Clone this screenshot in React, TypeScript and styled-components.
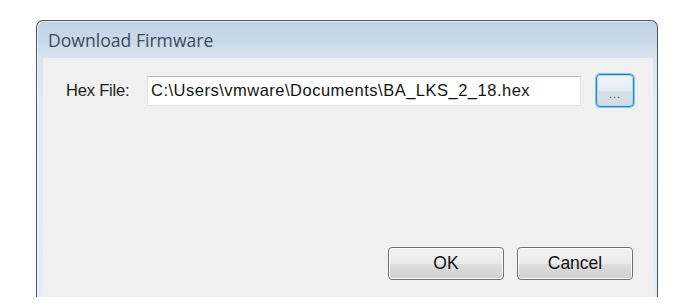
import React from 'react'
import styled, { createGlobalStyle } from 'styled-components'

const GlobalStyle = createGlobalStyle`
  html, body {
    margin: 0;
    padding: 0;
    background: #ffffff;
  }
  body {
    font-family: "Liberation Sans", Arial, sans-serif;
  }
`

const Page = styled.div`
  width: 689px;
  height: 305px;
  padding: 20px 0 0 36px;
  box-sizing: border-box;
  overflow: hidden;
`

const Window = styled.div`
  width: 622px;
  height: 277px;
  box-sizing: border-box;
  border: 1px solid #4d5663;
  border-bottom: none;
  border-radius: 7px 7px 0 0;
  background: linear-gradient(to bottom, #bfd0e4 0px, #cad9ea 20px, #d8e4f1 38px, #e2ebf5 80px, #e4edf6 100%);
  display: flex;
  flex-direction: column;
  box-shadow: inset 1px 1px 0 rgba(255, 255, 255, 0.6);
`

const TitleBar = styled.div`
  height: 37px;
  display: flex;
  align-items: center;
  padding-left: 11px;
  font-family: "Open Sans", "Noto Sans", sans-serif;
  font-size: 17.6px;
  color: #3d4a5e;
  flex-shrink: 0;
`

const Client = styled.div`
  flex: 1;
  margin: 0 4px 0 6px;
  background: #f0f0f0;
  display: flex;
  flex-direction: column;
  padding: 16px 17px 17px 23px;
  box-sizing: border-box;
  font-size: 16px;
  color: #111;
`

const FileRow = styled.div`
  display: flex;
  align-items: center;
  height: 33px;
`

const Label = styled.div`
  width: 81px;
  flex-shrink: 0;
  font-size: 16.5px;
  letter-spacing: -0.2px;
  color: #1c1c1c;
`

const TextBox = styled.div`
  width: 434px;
  height: 30px;
  flex-shrink: 0;
  box-sizing: border-box;
  background: #ffffff;
  border: 1px solid #e3e4e8;
  border-top-color: #b5b8c0;
  padding-left: 3px;
  display: flex;
  align-items: center;
  font-size: 16.5px;
  letter-spacing: 0.5px;
  color: #141414;
  white-space: nowrap;
  overflow: hidden;
`

const BrowseButton = styled.button`
  margin-left: 15px;
  width: 38px;
  height: 33px;
  flex-shrink: 0;
  box-sizing: border-box;
  border: 1px solid #3c7fb1;
  border-radius: 4px;
  background: linear-gradient(to bottom, #f0f5f9 0%, #e4ecf3 50%, #d6e0e9 51%, #d2dce6 100%);
  box-shadow: 0 0 0 1px #7ccaf0, inset 0 0 0 1px #a8dcf5;
  display: flex;
  align-items: flex-end;
  justify-content: center;
  padding: 0 0 6px;
  font-family: "Liberation Sans", Arial, sans-serif;
  font-size: 11px;
  color: #5a5a5a;
  letter-spacing: 1px;
`

const Footer = styled.div`
  margin-top: auto;
  display: flex;
  justify-content: flex-end;
  gap: 13px;
  padding-right: 3px;
`

const DialogButton = styled.button`
  width: 116px;
  height: 33px;
  box-sizing: border-box;
  border: 1px solid #707070;
  border-radius: 4px;
  background: linear-gradient(to bottom, #f3f3f3 0%, #ebebeb 50%, #dddddd 51%, #cfcfcf 100%);
  box-shadow: inset 0 0 0 1px #fbfbfb;
  font-family: "Liberation Sans", Arial, sans-serif;
  font-size: 17.5px;
  color: #111;
  padding: 0;
`

export default function App() {
  return (
    <>
      <GlobalStyle />
      <Page>
        <Window>
          <TitleBar>Download Firmware</TitleBar>
          <Client>
            <FileRow>
              <Label>Hex File:</Label>
              <TextBox>C:\Users\vmware\Documents\BA_LKS_2_18.hex</TextBox>
              <BrowseButton>...</BrowseButton>
            </FileRow>
            <Footer>
              <DialogButton>OK</DialogButton>
              <DialogButton>Cancel</DialogButton>
            </Footer>
          </Client>
        </Window>
      </Page>
    </>
  )
}
